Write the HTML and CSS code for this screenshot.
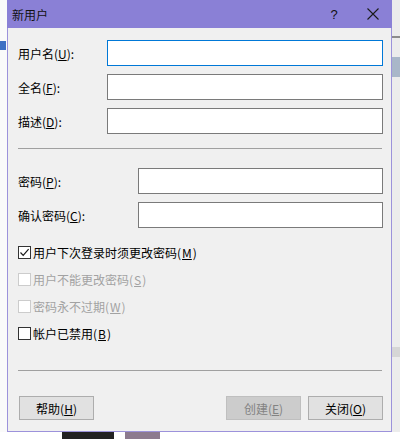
FILE: index.html
```html
<!DOCTYPE html>
<html>
    <head>
        <meta charset="UTF-8">
        <title>新用户</title>
        <link rel="stylesheet" href="styles.css">
    </head>
    <body>
        <div class="desk">
            <div class="side-left"><span class="icon-bit"></span></div>
            <div class="dialog">
                <div class="titlebar">
                    <span class="caption">新用户</span>
                    <span class="help">?</span>
                    <span class="close">
                        <svg width="12" height="12" viewBox="0 0 12 12"><path d="M0.5 0.5 L11.5 11.5 M11.5 0.5 L0.5 11.5" stroke="#1a1a1a" stroke-width="1.1" fill="none"/></svg>
                    </span>
                </div>
                <div class="body">
                    <div class="fields first">
                        <label>用户名(<u>U</u>):</label>
                        <div class="input focus"></div>
                        <label>全名(<u>F</u>):</label>
                        <div class="input"></div>
                        <label>描述(<u>D</u>):</label>
                        <div class="input"></div>
                    </div>
                    <div class="sep"></div>
                    <div class="fields second">
                        <label>密码(<u>P</u>):</label>
                        <div class="input"></div>
                        <label>确认密码(<u>C</u>):</label>
                        <div class="input"></div>
                    </div>
                    <div class="checks">
                        <div class="check">
                            <span class="box"><svg width="11" height="11" viewBox="0 0 11 11"><path d="M1.5 5.5 L4.2 8.3 L9.6 2.2" stroke="#1a1a1a" stroke-width="1.2" fill="none"/></svg></span>
                            用户下次登录时须更改密码(<u>M</u>)
                        </div>
                        <div class="check off"><span class="box"></span>用户不能更改密码(<u>S</u>)</div>
                        <div class="check off"><span class="box"></span>密码永不过期(<u>W</u>)</div>
                        <div class="check"><span class="box"></span>帐户已禁用(<u>B</u>)</div>
                    </div>
                    <div class="sep bottom"></div>
                    <div class="buttons">
                        <div class="btn">帮助(<u>H</u>)</div>
                        <div class="spacer"></div>
                        <div class="btn disabled">创建(<u>E</u>)</div>
                        <div class="btn">关闭(<u>O</u>)</div>
                    </div>
                </div>
            </div>
            <div class="side-right">
                <span class="rline"></span>
                <span class="rband"></span>
                <span class="rband low"></span>
            </div>
        </div>
        <div class="floor">
            <span class="dark"></span>
            <span class="pic"></span>
        </div>
    </body>
</html>
```

FILE: styles.css
```css
html, body { margin: 0; padding: 0; }
body { width: 400px; height: 439px; overflow: hidden; background: #fff; font-family: "Noto Sans CJK SC", "Noto Sans", sans-serif; font-size: 12px; color: #000; }
u { text-decoration: underline; text-underline-offset: 1px; }

.desk { display: flex; height: 432px; }
.side-left { width: 7px; background: #fafafa; border-right: 0; padding-top: 41px; box-sizing: border-box; }
.icon-bit { display: block; width: 6px; height: 9px; background: #3d6fc4; }
.side-right { width: 8px; background: #ececec; display: flex; flex-direction: column; }
.rline { display: block; height: 2px; margin-top: 36px; background: #8c8c8c; }
.rband { display: block; height: 20px; margin-top: 19px; background: #a9b7c9; }
.rband.low { height: 10px; margin-top: 270px; background: #d6d6d6; }

.dialog { width: 385px; box-sizing: border-box; border: 1px solid #9c92db; border-top: 0; background: #f0f0f0; display: flex; flex-direction: column; }
.titlebar { height: 28px; background: #8a80d6; display: flex; align-items: center; padding: 0 0 0 5px; margin: 0 -1px; }
.caption { flex: 1; font-size: 12px; color: #111; }
.help { width: 14px; text-align: center; font-family: "Liberation Sans", sans-serif; font-size: 13px; color: #111; margin-right: 26px; }
.close { width: 12px; height: 12px; display: flex; margin-right: 13px; }

.body { padding: 12px 8px 0 10px; }
.fields { display: grid; row-gap: 8px; align-items: center; }
.fields.first { grid-template-columns: 89px 1fr; }
.fields.second { grid-template-columns: 120px 1fr; }
.input { height: 26px; box-sizing: border-box; background: #fff; border: 1px solid #7a7a7a; }
.input.focus { border-color: #0078d7; }

.sep { height: 1px; background: #a0a0a0; margin: 14px 1px 19px 0; }
.sep.bottom { margin: 29px 1px 25px 0; }

.checks { display: flex; flex-direction: column; gap: 11px; margin-top: 16px; }
.check { display: flex; align-items: center; height: 16px; gap: 1px; }
.check .box { width: 13px; height: 13px; box-sizing: border-box; border: 1px solid #333; background: #fff; display: flex; align-items: center; justify-content: center; margin-right: 1px; }
.check.off { color: #a2a2a2; }
.check.off .box { border-color: #cccccc; }

.buttons { display: flex; gap: 7px; padding-left: 1px; }
.spacer { flex: 1; }
.btn { width: 75px; height: 24px; box-sizing: border-box; border: 1px solid #adadad; background: #e1e1e1; display: flex; align-items: center; justify-content: center; }
.btn.disabled { background: #cccccc; border-color: #bfbfbf; color: #838383; }

.floor { height: 7px; display: flex; background: #fff; }
.floor .dark { width: 52px; margin-left: 62px; background: #222; }
.floor .pic { width: 35px; margin-left: 11px; background: #8c7a8e; }
```
